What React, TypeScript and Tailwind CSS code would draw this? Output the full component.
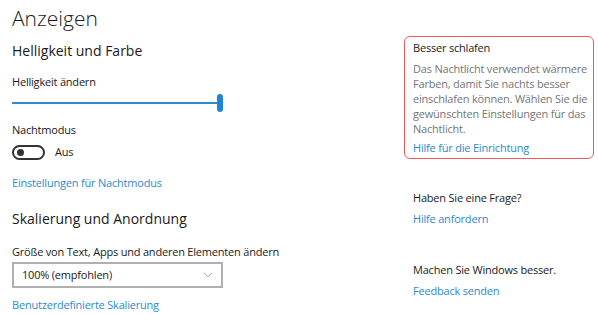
import { ChevronDown } from "lucide-react"

const font = { fontFamily: '"Segoe UI", "Open Sans", sans-serif' }

function Link({ children, className = "" }: { children: React.ReactNode; className?: string }) {
    return <div className={`text-[11px] leading-[16px] tracking-[-0.2px] text-[#2b8ad3] ${className}`}>{children}</div>
}

const bodyLines = [
    "Das Nachtlicht verwendet wärmere",
    "Farben, damit Sie nachts besser",
    "einschlafen können. Wählen Sie die",
    "gewünschten Einstellungen für das",
    "Nachtlicht.",
]

export default function App() {
    return (
        <div className="flex w-[598px] h-[314px] bg-white text-[#1a1a1a] overflow-hidden" style={font}>
            {/* left column */}
            <div className="w-[404px] pl-[12px] pt-[4px] flex flex-col">
                <h1 className="text-[21px] leading-[28px] font-light">Anzeigen</h1>

                <h2 className="mt-[9px] text-[14px] leading-[20px]">Helligkeit und Farbe</h2>

                <div className="mt-[13px] text-[11px] leading-[16px] tracking-[-0.2px]">Helligkeit ändern</div>

                <div className="mt-[4px] h-[18px] w-[211px] flex items-center">
                    <div className="h-[2px] flex-1 bg-[#2b8ad3]" />
                    <div className="h-[18px] w-[6px] rounded-full bg-[#1f84d2]" />
                </div>

                <div className="mt-[10px] text-[11px] leading-[16px] tracking-[-0.2px]">Nachtmodus</div>

                <div className="mt-[6px] h-[16px] flex items-center gap-[10px]">
                    <div className="w-[33px] h-[15px] rounded-full border-2 border-[#333] flex items-center pl-[3px]">
                        <div className="w-[7px] h-[7px] rounded-full bg-[#333]" />
                    </div>
                    <span className="text-[11px] leading-[16px] tracking-[-0.2px]">Aus</span>
                </div>

                <Link className="mt-[15px]">Einstellungen für Nachtmodus</Link>

                <h2 className="mt-[18px] text-[14px] leading-[20px]">Skalierung und Anordnung</h2>

                <div className="mt-[15px] text-[11px] leading-[16px] tracking-[-0.2px]">Größe von Text, Apps und anderen Elementen ändern</div>

                <div className="mt-[2px] w-[211px] h-[26px] border-2 border-[#b0b0b0] flex items-center justify-between pl-[8px] pr-[6px]">
                    <span className="text-[11px] leading-[16px] tracking-[-0.2px]">100% (empfohlen)</span>
                    <ChevronDown className="w-[14px] h-[14px] text-[#777]" strokeWidth={1.2} />
                </div>

                <Link className="mt-[9px]">Benutzerdefinierte Skalierung</Link>
            </div>

            {/* right column */}
            <div className="flex-1 pt-[36px] flex flex-col">
                <div className="w-[190px] border border-[#ef5a5a] rounded-[6px] pl-[8px] pr-[2px] pt-[3px] pb-[2px]">
                    <div className="text-[11px] leading-[16px] tracking-[-0.2px]">Besser schlafen</div>
                    <div className="mt-[5px] text-[11px] leading-[15px] tracking-[-0.2px] text-[#767676]">
                        {bodyLines.map((line) => (
                            <div key={line} className="whitespace-nowrap">{line}</div>
                        ))}
                    </div>
                    <Link className="mt-[4px]">Hilfe für die Einrichtung</Link>
                </div>

                <div className="pl-[9px] flex flex-col">
                    <div className="mt-[31px] text-[11px] leading-[16px] tracking-[-0.2px]">Haben Sie eine Frage?</div>
                    <Link className="mt-[5px]">Hilfe anfordern</Link>
                    <div className="mt-[35px] text-[11px] leading-[16px] tracking-[-0.2px]">Machen Sie Windows besser.</div>
                    <Link className="mt-[5px]">Feedback senden</Link>
                </div>
            </div>
        </div>
    )
}
